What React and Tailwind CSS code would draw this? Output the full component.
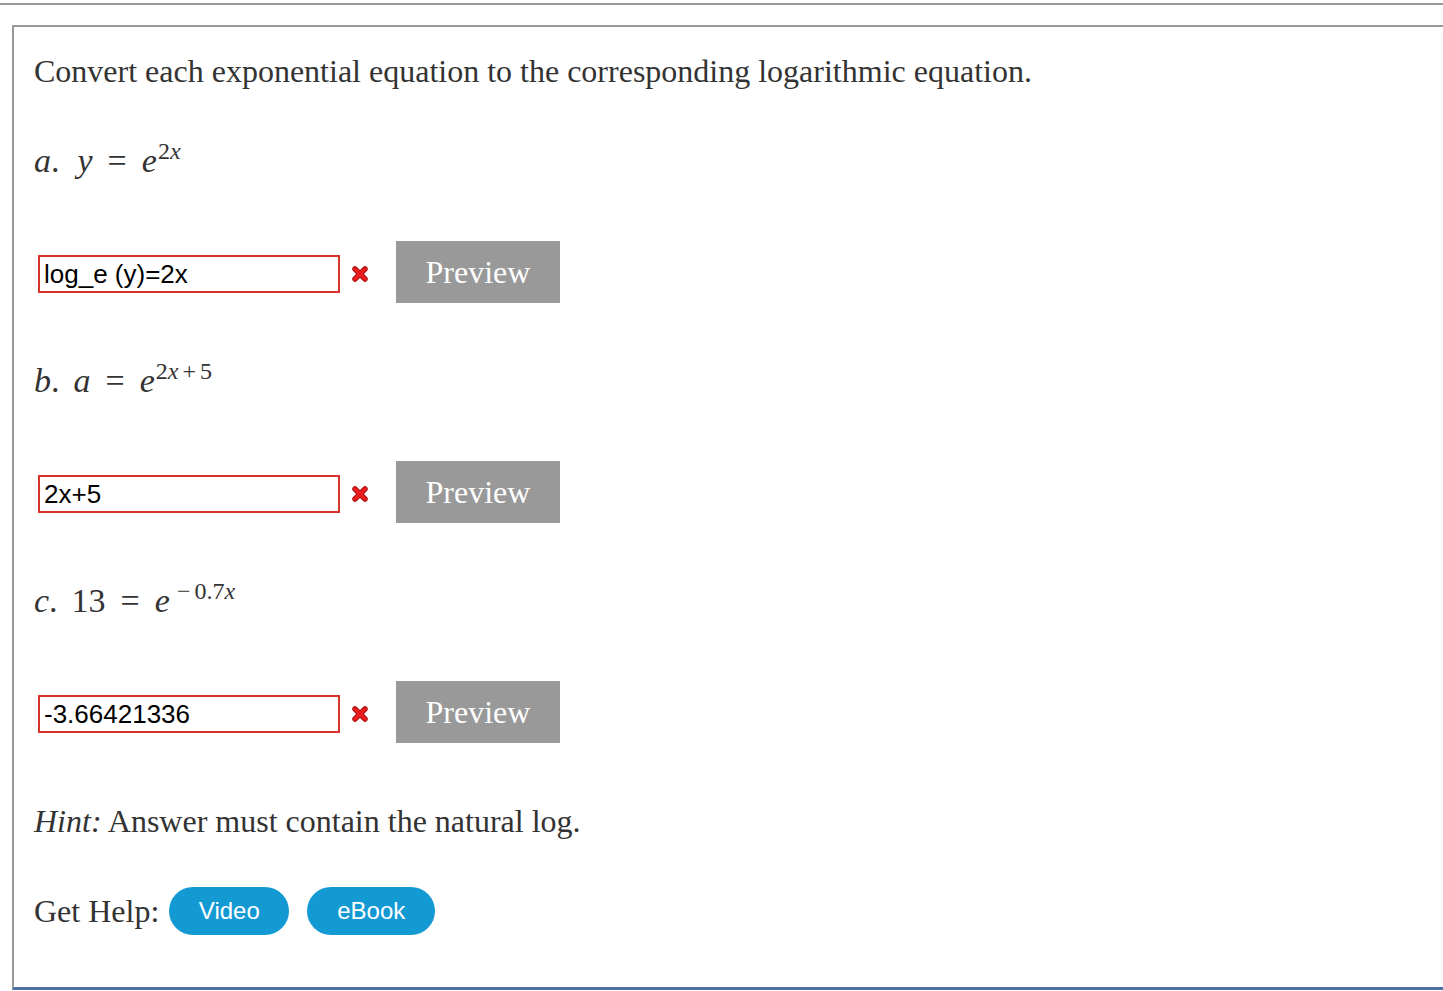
import React from 'react';

const serif = { fontFamily: '"Liberation Serif", "Times New Roman", serif' };

const ErrorMark = () => (
    <svg width="16" height="16" viewBox="0 0 16 16" className="ml-[12px] shrink-0 self-start mt-[25px]">
        <path d="M3 3 L13 13 M13 3 L3 13" stroke="#a51010" strokeWidth="5.5" strokeLinecap="round" />
        <path d="M3 3 L13 13 M13 3 L3 13" stroke="#ee1c1c" strokeWidth="3.5" strokeLinecap="round" />
    </svg>
);

const AnswerRow = ({ value }) => (
    <div className="flex items-center h-[62px]">
        <input
            readOnly
            defaultValue={value}
            className="ml-[4px] self-start mt-[14px] w-[302px] h-[38px] border-2 border-[#d8322f] pl-[4px] text-[26px] text-black outline-none"
            style={{ fontFamily: '"Liberation Sans", Arial, sans-serif' }}
        />
        <ErrorMark />
        <button className="ml-[28px] w-[164px] h-[62px] bg-[#999999] text-white text-[32px]" style={serif}>
            Preview
        </button>
    </div>
);

const Sup = ({ children }) => (
    <span className="relative -top-[13px] ml-[1px] text-[24px] leading-none">{children}</span>
);

const App = () => {
    return (
        <div className="min-h-screen bg-white pt-[3px] text-[#333]" style={serif}>
            <div className="h-[2px] bg-[#999999]" />
            <div className="mt-[20px] ml-[12px] border-l-2 border-t-2 border-[#999999] border-b-[3px] border-b-[#4d70a6] pl-[20px] pt-[25px] pb-[52px]">
                <p className="text-[32px] leading-[38px]">
                    Convert each exponential equation to the corresponding logarithmic equation.
                </p>

                {/* a */}
                <div className="mt-[52px] text-[34px] leading-[38px] whitespace-nowrap">
                    <i>a</i>.<i className="ml-[18px]">y</i>
                    <span className="mx-[15px]">=</span>
                    <i>e</i><Sup>2<i>x</i></Sup>
                </div>
                <div className="mt-[61px]">
                    <AnswerRow value="log_e (y)=2x" />
                </div>

                {/* b */}
                <div className="mt-[59px] text-[34px] leading-[38px] whitespace-nowrap">
                    <i>b</i>.<i className="ml-[14px]">a</i>
                    <span className="mx-[15px]">=</span>
                    <i>e</i><Sup>2<i>x</i><span className="mx-[4px]">+</span>5</Sup>
                </div>
                <div className="mt-[61px]">
                    <AnswerRow value="2x+5" />
                </div>

                {/* c */}
                <div className="mt-[59px] text-[34px] leading-[38px] whitespace-nowrap">
                    <i>c</i>.<span className="ml-[14px]">13</span>
                    <span className="mx-[15px]">=</span>
                    <i>e</i><Sup><span className="ml-[6px] mr-[4px]">−</span>0.7<i>x</i></Sup>
                </div>
                <div className="mt-[61px]">
                    <AnswerRow value="-3.66421336" />
                </div>

                <p className="mt-[59px] text-[32px] leading-[38px]">
                    <i>Hint:</i> Answer must contain the natural log.
                </p>

                <div className="mt-[47px] flex items-center h-[48px]">
                    <span className="text-[32px] leading-[38px]">Get Help:</span>
                    <button
                        className="ml-[10px] w-[120px] h-[48px] rounded-full bg-[#139ad3] text-white text-[24px]"
                        style={{ fontFamily: '"Liberation Sans", Arial, sans-serif' }}
                    >
                        Video
                    </button>
                    <button
                        className="ml-[18px] w-[128px] h-[48px] rounded-full bg-[#139ad3] text-white text-[24px]"
                        style={{ fontFamily: '"Liberation Sans", Arial, sans-serif' }}
                    >
                        eBook
                    </button>
                </div>
            </div>
        </div>
    );
};

export default App;
